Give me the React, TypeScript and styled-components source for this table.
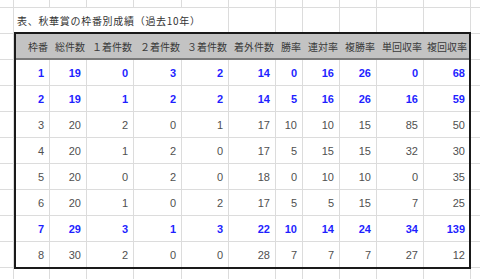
import { createGlobalStyle, styled } from "styled-components";

const GlobalStyle = createGlobalStyle`
  html, body {
    margin: 0;
    padding: 0;
    background: #ffffff;
  }
  body {
    font-family: "Noto Sans CJK JP", "Liberation Sans", sans-serif;
  }
`;

const GRID = "#dcdcdc";

// widths of the sheet cells above / below the table (x = 14 .. 470)
const sheetCols = [36, 37, 47, 48, 47, 47, 27, 37, 37, 47, 47];
// widths of the columns inside the table border
const tableCols = [34, 37, 47, 48, 47, 47, 27, 37, 37, 47, 45];

const headers = [
  "枠番",
  "総件数",
  "１着件数",
  "２着件数",
  "３着件数",
  "着外件数",
  "勝率",
  "連対率",
  "複勝率",
  "単回収率",
  "複回収率",
];

const rows: { blue: boolean; values: number[] }[] = [
  { blue: true, values: [1, 19, 0, 3, 2, 14, 0, 16, 26, 0, 68] },
  { blue: true, values: [2, 19, 1, 2, 2, 14, 5, 16, 26, 16, 59] },
  { blue: false, values: [3, 20, 2, 0, 1, 17, 10, 10, 15, 85, 50] },
  { blue: false, values: [4, 20, 1, 2, 0, 17, 5, 15, 15, 32, 30] },
  { blue: false, values: [5, 20, 0, 2, 0, 18, 0, 10, 10, 0, 35] },
  { blue: false, values: [6, 20, 1, 0, 2, 17, 5, 5, 15, 7, 25] },
  { blue: true, values: [7, 29, 3, 1, 3, 22, 10, 14, 24, 34, 139] },
  { blue: false, values: [8, 30, 2, 0, 0, 28, 7, 7, 7, 27, 12] },
];

const Page = styled.div`
  display: flex;
  width: 480px;
  height: 279px;
  overflow: hidden;
  background: #ffffff;
`;

const Gutter = styled.div<{ $w?: number }>`
  display: flex;
  flex-direction: column;
  flex: ${(p) => (p.$w ? `0 0 ${p.$w}px` : "1 1 auto")};
  border-right: ${(p) => (p.$w ? `1px solid ${GRID}` : "none")};
  box-sizing: border-box;
`;

const GutterCell = styled.div<{ $h?: number }>`
  flex: ${(p) => (p.$h ? `0 0 ${p.$h}px` : "1 1 auto")};
  box-sizing: border-box;
  border-bottom: ${(p) => (p.$h ? `1px solid ${GRID}` : "none")};
`;

const Main = styled.div`
  display: flex;
  flex-direction: column;
  flex: 0 0 457px;
`;

const SheetRow = styled.div<{ $h?: number }>`
  display: flex;
  flex: ${(p) => (p.$h ? `0 0 ${p.$h}px` : "1 1 auto")};
`;

const SheetCell = styled.div<{ $w: number; $bottom?: boolean }>`
  flex: 0 0 ${(p) => p.$w}px;
  box-sizing: border-box;
  border-right: 1px solid ${GRID};
  border-bottom: ${(p) => (p.$bottom ? `1px solid ${GRID}` : "none")};
`;

const TitleCell = styled.div<{ $w: number }>`
  flex: 0 0 ${(p) => p.$w}px;
  box-sizing: border-box;
  border-right: 1px solid ${GRID};
  display: flex;
  align-items: center;
  padding-left: 3px;
  padding-top: 1px;
  font-size: 10px;
  letter-spacing: 0.7px;
  color: #333333;
  white-space: nowrap;
`;

const Table = styled.div`
  display: grid;
  grid-template-columns: ${tableCols.map((c) => `${c}px`).join(" ")};
  border: 2px solid #1a1a1a;
  box-sizing: border-box;
  flex: 0 0 auto;
`;

const HeadCell = styled.div`
  height: 26px;
  box-sizing: border-box;
  background: #c3c3c3;
  border-bottom: 2px solid #7a7a7a;
  display: flex;
  align-items: center;
  justify-content: flex-end;
  padding-right: 2px;
  font-size: 10px;
  color: #3a3a3a;
  white-space: nowrap;
`;

const DataCell = styled.div<{ $blue: boolean; $lastCol: boolean; $lastRow: boolean }>`
  height: ${(p) => (p.$lastRow ? 25 : 26)}px;
  box-sizing: border-box;
  border-right: ${(p) => (p.$lastCol ? "none" : `1px solid ${GRID}`)};
  border-bottom: ${(p) => (p.$lastRow ? "none" : `1px solid ${GRID}`)};
  display: flex;
  align-items: center;
  justify-content: flex-end;
  padding-right: ${(p) => (p.$lastCol ? 4 : 5)}px;
  font-family: "Liberation Sans", Arial, sans-serif;
  font-size: 11px;
  font-weight: ${(p) => (p.$blue ? 700 : 400)};
  color: ${(p) => (p.$blue ? "#1f1fff" : "#505050")};
`;

function SideGutter({ w }: { w?: number }) {
  return (
    <Gutter $w={w}>
      <GutterCell $h={8} />
      {Array.from({ length: 10 }).map((_, i) => (
        <GutterCell key={i} $h={26} />
      ))}
      <GutterCell />
    </Gutter>
  );
}

export default function App() {
  const titleWidth = sheetCols.slice(0, 5).reduce((a, b) => a + b, 0);

  return (
    <>
      <GlobalStyle />
      <Page>
        <SideGutter w={14} />
        <Main>
          <SheetRow $h={8}>
            {sheetCols.map((w, i) => (
              <SheetCell key={i} $w={w} $bottom />
            ))}
          </SheetRow>
          <SheetRow $h={24}>
            <TitleCell $w={titleWidth}>表、秋華賞の枠番別成績（過去10年）</TitleCell>
            {sheetCols.slice(5).map((w, i) => (
              <SheetCell key={i} $w={w} />
            ))}
          </SheetRow>
          <Table>
            {headers.map((h) => (
              <HeadCell key={h}>{h}</HeadCell>
            ))}
            {rows.map((row, r) =>
              row.values.map((v, c) => (
                <DataCell
                  key={`${r}-${c}`}
                  $blue={row.blue}
                  $lastCol={c === row.values.length - 1}
                  $lastRow={r === rows.length - 1}
                >
                  {v}
                </DataCell>
              ))
            )}
          </Table>
          <SheetRow>
            {sheetCols.map((w, i) => (
              <SheetCell key={i} $w={w} />
            ))}
          </SheetRow>
        </Main>
        <SideGutter />
      </Page>
    </>
  );
}
